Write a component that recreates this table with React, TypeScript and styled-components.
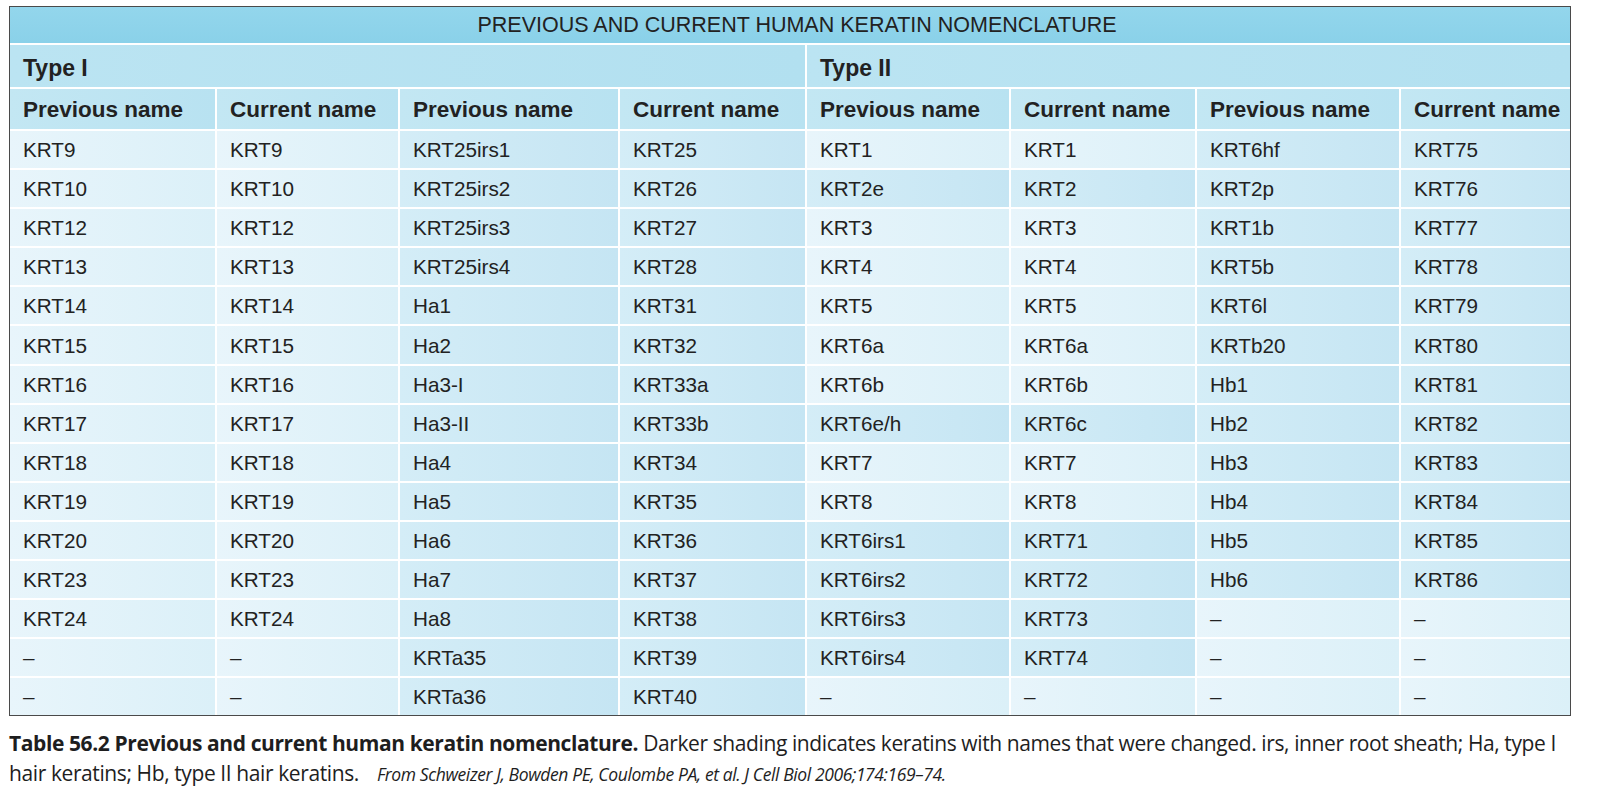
import React from 'react'
import styled, { createGlobalStyle } from 'styled-components'

const GlobalStyle = createGlobalStyle`
  html, body {
    margin: 0;
    padding: 0;
    background: #fff;
  }
`

const Page = styled.div`
  padding: 6px 0 0 9px;
  width: 1600px;
  height: 792px;
  box-sizing: border-box;
  overflow: hidden;
`

const Table = styled.div`
  display: grid;
  grid-template-columns: 205px 181px 218px 185px 202px 184px 202px 169px;
  grid-template-rows: 36px 42px 40px repeat(15, 37.1px);
  gap: 2px;
  width: max-content;
  background: #fff;
  border: 1.5px solid #4a4a4a;
  color: #222;
`

const TitleBar = styled.div`
  grid-column: 1 / -1;
  display: flex;
  align-items: center;
  justify-content: center;
  padding-left: 14px;
  background: linear-gradient(to bottom, #93d6ec, #8ad1e9);
  font-family: 'Liberation Sans', Arial, sans-serif;
  font-size: 21.5px;
`

const TypeCell = styled.div`
  grid-column: span 4;
  display: flex;
  align-items: center;
  padding: 5px 0 0 13px;
  background: linear-gradient(to right, #bbe4f2, #b2e0f0);
  font-family: 'Liberation Sans', Arial, sans-serif;
  font-weight: bold;
  font-size: 23px;
`

const HeadCell = styled.div`
  display: flex;
  align-items: center;
  padding: 2px 0 0 13px;
  background: linear-gradient(to right, #c3e7f3, #b8e2f1);
  font-family: 'Liberation Sans', Arial, sans-serif;
  font-weight: bold;
  font-size: 22.5px;
  white-space: nowrap;
`

const DataCell = styled.div<{ $changed: boolean }>`
  display: flex;
  align-items: center;
  padding: 1px 0 0 13px;
  font-family: 'Liberation Sans', Arial, sans-serif;
  font-size: 20.7px;
  white-space: nowrap;
  background: ${({ $changed }) =>
    $changed
      ? 'linear-gradient(to right, #d4edf7, #c5e5f3)'
      : 'linear-gradient(to right, #e8f5fb, #dbf0f8)'};
`

const Caption = styled.div`
  margin-top: 12px;
  font-family: 'Open Sans', 'Noto Sans', sans-serif;
  font-size: 21px;
  line-height: 30px;
  color: #1e1e1e;
  letter-spacing: -0.4px;
  white-space: nowrap;
  b {
    font-weight: 700;
  }
`

const Source = styled.span`
  font-style: italic;
  font-size: 17.5px;
  margin-left: 18px;
  letter-spacing: -0.4px;
`

const headers = ['Previous name', 'Current name']

const rows: string[][] = [
  ['KRT9', 'KRT9', 'KRT25irs1', 'KRT25', 'KRT1', 'KRT1', 'KRT6hf', 'KRT75'],
  ['KRT10', 'KRT10', 'KRT25irs2', 'KRT26', 'KRT2e', 'KRT2', 'KRT2p', 'KRT76'],
  ['KRT12', 'KRT12', 'KRT25irs3', 'KRT27', 'KRT3', 'KRT3', 'KRT1b', 'KRT77'],
  ['KRT13', 'KRT13', 'KRT25irs4', 'KRT28', 'KRT4', 'KRT4', 'KRT5b', 'KRT78'],
  ['KRT14', 'KRT14', 'Ha1', 'KRT31', 'KRT5', 'KRT5', 'KRT6l', 'KRT79'],
  ['KRT15', 'KRT15', 'Ha2', 'KRT32', 'KRT6a', 'KRT6a', 'KRTb20', 'KRT80'],
  ['KRT16', 'KRT16', 'Ha3-I', 'KRT33a', 'KRT6b', 'KRT6b', 'Hb1', 'KRT81'],
  ['KRT17', 'KRT17', 'Ha3-II', 'KRT33b', 'KRT6e/h', 'KRT6c', 'Hb2', 'KRT82'],
  ['KRT18', 'KRT18', 'Ha4', 'KRT34', 'KRT7', 'KRT7', 'Hb3', 'KRT83'],
  ['KRT19', 'KRT19', 'Ha5', 'KRT35', 'KRT8', 'KRT8', 'Hb4', 'KRT84'],
  ['KRT20', 'KRT20', 'Ha6', 'KRT36', 'KRT6irs1', 'KRT71', 'Hb5', 'KRT85'],
  ['KRT23', 'KRT23', 'Ha7', 'KRT37', 'KRT6irs2', 'KRT72', 'Hb6', 'KRT86'],
  ['KRT24', 'KRT24', 'Ha8', 'KRT38', 'KRT6irs3', 'KRT73', '–', '–'],
  ['–', '–', 'KRTa35', 'KRT39', 'KRT6irs4', 'KRT74', '–', '–'],
  ['–', '–', 'KRTa36', 'KRT40', '–', '–', '–', '–'],
]

// a pair is shaded darker when the name was changed
const isChanged = (row: string[], col: number) => {
  const start = col - (col % 2)
  const prev = row[start]
  const current = row[start + 1]
  return prev !== '–' && prev !== current
}

const App = () => {
  return (
    <>
      <GlobalStyle />
      <Page>
        <Table>
          <TitleBar>PREVIOUS AND CURRENT HUMAN KERATIN NOMENCLATURE</TitleBar>
          <TypeCell>Type I</TypeCell>
          <TypeCell>Type II</TypeCell>
          {[0, 1, 2, 3, 4, 5, 6, 7].map((i) => (
            <HeadCell key={'h' + i}>{headers[i % 2]}</HeadCell>
          ))}
          {rows.map((row, r) =>
            row.map((cell, c) => (
              <DataCell key={r + '-' + c} $changed={isChanged(row, c)}>
                {cell}
              </DataCell>
            ))
          )}
        </Table>
        <Caption>
          <b>Table 56.2 Previous and current human keratin nomenclature.</b> Darker shading indicates
          keratins with names that were changed. irs, inner root sheath; Ha, type I
          <br />
          hair keratins; Hb, type II hair keratins.
          <Source>From Schweizer J, Bowden PE, Coulombe PA, et al. J Cell Biol 2006;174:169–74.</Source>
        </Caption>
      </Page>
    </>
  )
}

export default App
